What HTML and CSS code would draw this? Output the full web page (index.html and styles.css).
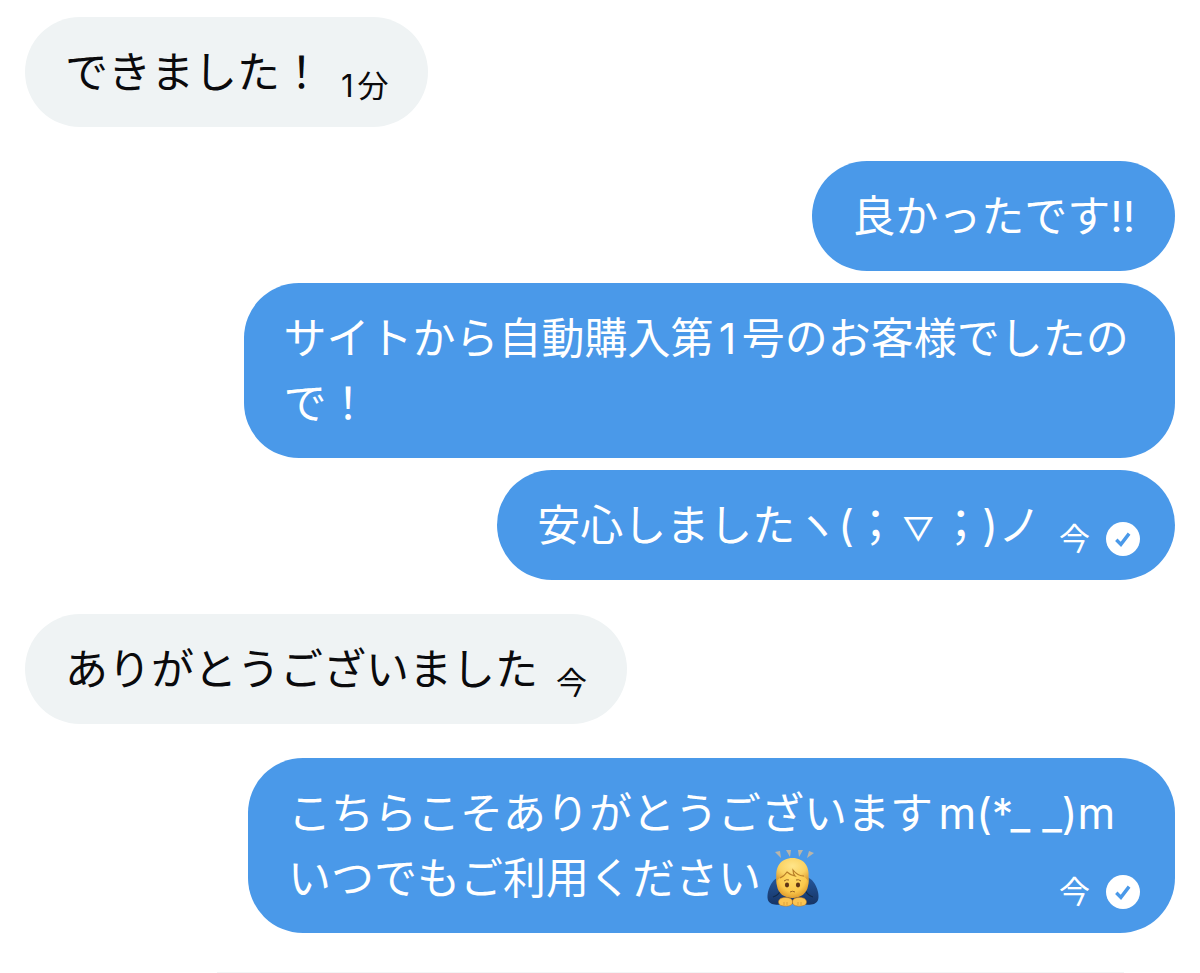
FILE: index.html
```html
<!DOCTYPE html>
<html lang="ja">
<head>
    <meta charset="UTF-8">
    <meta name="viewport" content="width=device-width, initial-scale=1.0">
    <title>メッセージ</title>
    <link rel="stylesheet" href="styles.css">
</head>
<body>
    <main class="chat">
        <div class="group received">
            <div class="bubble">
                <p class="text">できました！</p>
                <span class="meta">1分</span>
            </div>
        </div>

        <div class="group sent">
            <div class="bubble">
                <p class="text">良かったです!!</p>
            </div>
            <div class="bubble">
                <p class="text">サイトから自動購入第1号のお客様でしたので！</p>
            </div>
            <div class="bubble with-check">
                <p class="text">安心しましたヽ(；<span class="mouth">▽</span>；)ノ</p>
                <span class="meta">今
                    <svg class="check" viewBox="0 0 34 34" role="img" aria-label="送信済み">
                        <circle cx="17" cy="17" r="17" fill="#fff"/>
                        <path d="M10.3 17.8l4.6 4.6 8.2-10.8" fill="none" stroke="#4a99e9" stroke-width="3.4"/>
                    </svg>
                </span>
            </div>
        </div>

        <div class="group received">
            <div class="bubble">
                <p class="text">ありがとうございました</p>
                <span class="meta">今</span>
            </div>
        </div>

        <div class="group sent">
            <div class="bubble with-check wide">
                <p class="text">こちらこそありがとうございますm(*_ _)m<br>いつでもご利用ください<svg class="emoji" viewBox="0 0 54 58" role="img" aria-label="お辞儀">
                        <defs>
                            <radialGradient id="skin" cx="50%" cy="40%" r="62%">
                                <stop offset="0" stop-color="#ffdc6b"/>
                                <stop offset="0.7" stop-color="#fbc94c"/>
                                <stop offset="1" stop-color="#de9a2c"/>
                            </radialGradient>
                            <radialGradient id="hair" cx="50%" cy="35%" r="70%">
                                <stop offset="0" stop-color="#ffe58a"/>
                                <stop offset="0.6" stop-color="#fad262"/>
                                <stop offset="1" stop-color="#dfa136"/>
                            </radialGradient>
                            <linearGradient id="shirt" x1="0" y1="0" x2="0" y2="1">
                                <stop offset="0" stop-color="#24579c"/>
                                <stop offset="1" stop-color="#163465"/>
                            </linearGradient>
                        </defs>
                        <path d="M8 3l5-1 1 7zM19 1l5 0-1 7zM31 1l5 0-4 7zM42 2l5 2-7 5z" fill="#b9b5a9"/>
                        <path d="M13 28C7 29 3 35 1 43c-1 5-1 10 4 12 3 1 9 1 13 0h15c5 1 11 1 14 0 5-2 5-7 4-12-2-8-6-14-12-15z" fill="url(#shirt)"/>
                        <path d="M6 48c4-1 6-3 8-7M46 48c-4-1-6-3-8-7" stroke="#102949" stroke-width="1.2" fill="none"/>
                        <path d="M10 27c0-11 6-17 15.500-17S41 16 41 27c1 3 1 7 0 10-1 7-7 12-15.500 12S11 44 10 37c-1-3-1-7 0-10z" fill="url(#skin)"/>
                        <path d="M10 32C7 18 14 9 25.500 9S44 18 41 32c-1-2-2-3-4-4-4 0-8-3-11-6 0 3 1 5 2 6-4-1-6-2-8-4-2 3-5 4-7 5-2 1-2 2-3 3z" fill="url(#hair)"/>
                        <path d="M13 29c3-1 5-3 7-6 2 2 4 3 8 4-1-1-2-3-2-6 3 4 7 6 11 6" fill="none" stroke="#b87e28" stroke-width="1.1"/>
                        <ellipse cx="20" cy="36" rx="2.100" ry="2.400" fill="#5e3416"/>
                        <ellipse cx="31" cy="36" rx="2.100" ry="2.400" fill="#5e3416"/>
                        <path d="M17 32q2.500-2 5-1M29 31q2.500-1 5 1M23 43q2.500-1.500 5 0" fill="none" stroke="#9a6523" stroke-width="1"/>
                        <path d="M13 50c2-2 9-2 11 0 2 1 2 5 0 6-3 2-9 1-11 0-2-2-2-4 0-6zM27 50c2-2 9-2 11 0 2 2 2 4 0 6-2 1-8 2-11 0-2-1-2-5 0-6z" fill="#fac452" stroke="#b87928" stroke-width="0.6"/>
                        <path d="M17 56v-3M20 56v-3M31 56v-3M34 56v-3" stroke="#c98a2f" stroke-width="0.6"/>
                    </svg></p>
                <span class="meta inset">今
                    <svg class="check" viewBox="0 0 34 34" role="img" aria-label="送信済み">
                        <circle cx="17" cy="17" r="17" fill="#fff"/>
                        <path d="M10.3 17.8l4.6 4.6 8.2-10.8" fill="none" stroke="#4a99e9" stroke-width="3.4"/>
                    </svg>
                </span>
            </div>
        </div>
        <hr class="divider">
    </main>
</body>
</html>
```

FILE: styles.css
```css
body {
    margin: 0;
    background: #fff;
    color: #0a0a0c;
    font-family: Inter, "Noto Sans CJK JP", sans-serif;
    text-autospace: normal;
}
.chat {
    padding: 17px 25px 0;
}
.group {
    display: flex;
    flex-direction: column;
    align-items: flex-start;
    gap: 12px;
    margin-bottom: 34px;
}
.bubble {
    display: flex;
    align-items: flex-end;
    justify-content: space-between;
    gap: 18px;
    box-sizing: border-box;
    max-width: 81%;
    padding: 23px 40px 22px;
    border-radius: 55px;
    background: #eff3f4;
}
.sent {
    align-items: flex-end;
}
.sent .bubble {
    background: #4a99e9;
    color: #fff;
}
.text {
    margin: 0;
    font-size: 43px;
    line-height: 65px;
}
.mouth {
    margin: 0 5px;
    font-size: 32px;
    line-height: 32px;
}
.meta {
    display: flex;
    align-items: center;
    gap: 16px;
    font-size: 31px;
    line-height: 38px;
    white-space: nowrap;
}
.sent .with-check {
    padding-right: 35px;
}
.wide {
    min-width: 80.6%;
}
/* time sits in the free end of the last line */
.inset {
    margin-left: -98px;
}
.check {
    width: 34px;
    height: 34px;
}
.emoji {
    width: 54px;
    height: 58px;
    margin-left: 6px;
    vertical-align: -13px;
}
.divider {
    height: 1px;
    margin: 39px 51px 0 192px;
    border: 0;
    background: #f3f4f5;
}
```
